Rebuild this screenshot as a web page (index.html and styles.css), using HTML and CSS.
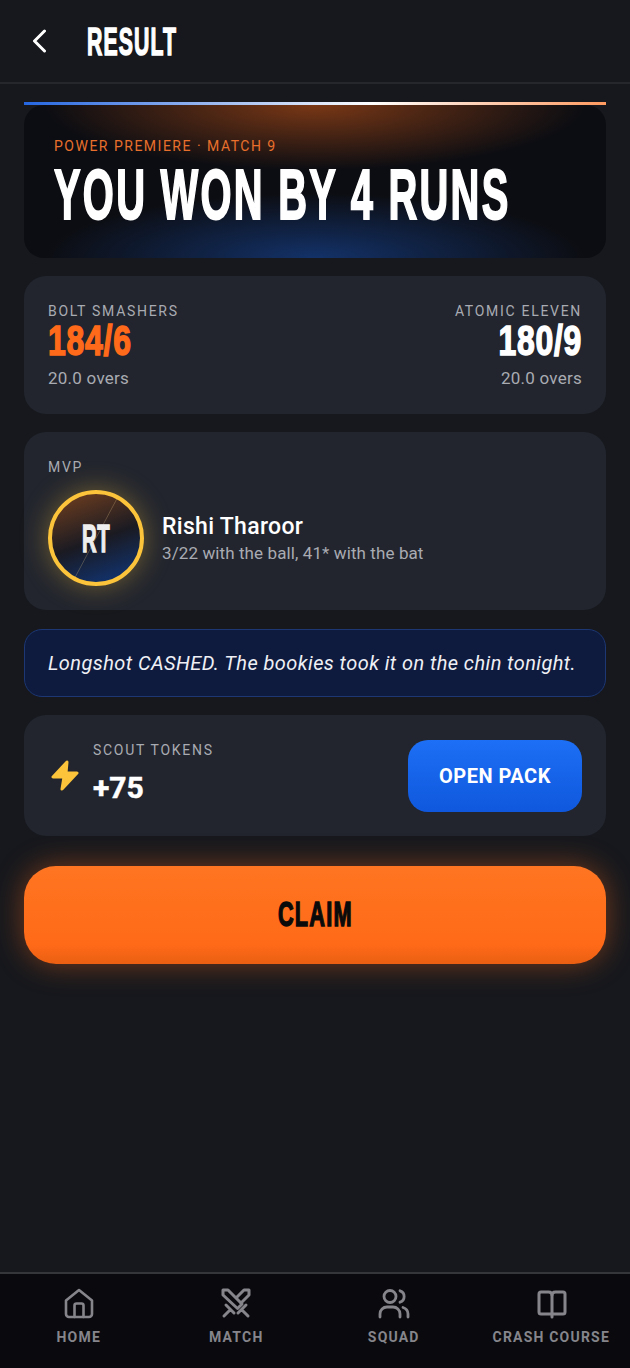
FILE: index.html
```html
<!DOCTYPE html>
<html lang="en">
<head>
    <meta charset="UTF-8">
    <meta name="viewport" content="width=device-width, initial-scale=1.0">
    <title>Result</title>
    <link rel="stylesheet" href="styles.css">
</head>
<body>
    <div id="app">
        <header class="top-bar">
            <svg class="back-icon" width="24" height="24" viewBox="0 0 24 24" fill="none" stroke="#fff" stroke-width="3" stroke-linecap="round" stroke-linejoin="round"><path d="M17.500 2 7.500 12l10 10"/></svg>
            <h1 class="display top-title">RESULT</h1>
        </header>

        <main class="content">
            <section class="hero">
                <div class="hero-stripe"></div>
                <div class="hero-body">
                    <div class="hero-label">POWER PREMIERE · MATCH 9</div>
                    <div class="display hero-title">YOU WON BY 4 RUNS</div>
                </div>
            </section>

            <section class="card score-card">
                <div class="team">
                    <div class="eyebrow">BOLT SMASHERS</div>
                    <div class="display score orange">184/6</div>
                    <div class="overs">20.0 overs</div>
                </div>
                <div class="team right">
                    <div class="eyebrow">ATOMIC ELEVEN</div>
                    <div class="display score">180/9</div>
                    <div class="overs">20.0 overs</div>
                </div>
            </section>

            <section class="card mvp-card">
                <div class="eyebrow">MVP</div>
                <div class="mvp-row">
                    <div class="avatar"><span class="display avatar-text">RT</span></div>
                    <div>
                        <div class="mvp-name">Rishi Tharoor</div>
                        <div class="mvp-line">3/22 with the ball, 41* with the bat</div>
                    </div>
                </div>
            </section>

            <section class="quote">Longshot CASHED. The bookies took it on the chin tonight.</section>

            <section class="card token-card">
                <svg class="bolt" width="32" height="34" viewBox="0 0 32 34"><path d="M19 4 5 19h11l-2 12 15-16H18z" fill="#fcc43a" stroke="#fcc43a" stroke-width="3" stroke-linejoin="round"/></svg>
                <div class="token-text">
                    <div class="eyebrow">SCOUT TOKENS</div>
                    <div class="token-num">+75</div>
                </div>
                <button class="pack-btn">OPEN PACK</button>
            </section>

            <button class="claim-btn"><span class="display claim-text">CLAIM</span></button>
        </main>

        <nav class="bottom-nav">
            <div class="nav-item">
                <svg width="32" height="32" viewBox="0 0 32 32" fill="none" stroke="#85858b" stroke-width="2.600" stroke-linejoin="round" stroke-linecap="round"><path d="M3 13.500 16 3l13 10.500V27a3 3 0 0 1-3 3H6a3 3 0 0 1-3-3z"/><path d="M11.500 30V18.500a2 2 0 0 1 2-2h5a2 2 0 0 1 2 2V30"/></svg>
                <span>HOME</span>
            </div>
            <div class="nav-item">
                <svg width="32" height="32" viewBox="0 0 32 32" fill="none" stroke="#85858b" stroke-width="3" stroke-linejoin="round" stroke-linecap="round"><path d="M3 3h5l14 14-4.500 4.500L3 8z"/><path d="M17 10 24 3h5v5l-8 8"/><path d="M6 18l8 8M18 26l8-8M4 29l5-5M28 29l-5-5"/></svg>
                <span>MATCH</span>
            </div>
            <div class="nav-item">
                <svg width="32" height="32" viewBox="0 0 32 32" fill="none" stroke="#85858b" stroke-width="2.800" stroke-linecap="round" stroke-linejoin="round"><circle cx="12" cy="9.500" r="6"/><path d="M22 3.800a6 6 0 0 1 0 11.400"/><path d="M2 30v-3a7 7 0 0 1 7-7h6a7 7 0 0 1 7 7v3"/><path d="M25 20.500a7 7 0 0 1 5 6.500v3"/></svg>
                <span>SQUAD</span>
            </div>
            <div class="nav-item">
                <svg width="32" height="32" viewBox="0 0 32 32" fill="none" stroke="#85858b" stroke-width="3" stroke-linecap="round" stroke-linejoin="round"><path d="M17 8c0-2-1.500-3-3.500-3H6a2 2 0 0 0-2 2v18a2 2 0 0 0 2 2h22a2 2 0 0 0 2-2V7a2 2 0 0 0-2-2h-7.500C18.500 5 17 6 17 8z"/><path d="M17 8v22"/></svg>
                <span>CRASH COURSE</span>
            </div>
        </nav>
    </div>
</body>
</html>
```

FILE: styles.css
```css
* {box-sizing: border-box;}
html, body {margin: 0; padding: 0;}
body {background: #16181d; color: #fff; font-family: "Roboto", "Liberation Sans", sans-serif;}
#app {width: 630px; height: 1368px; display: flex; flex-direction: column; overflow: hidden;}

/* no condensed face installed, so the headlines get squeezed with scaleX */
.display {
    display: inline-block;
    font-family: "Liberation Sans", sans-serif;
    font-weight: 700;
    white-space: nowrap;
    transform-origin: left center;
    -webkit-text-stroke: 1.500px currentColor;
}

.top-bar {
    height: 84px;
    flex: none;
    display: flex;
    align-items: center;
    gap: 36px;
    padding: 0 27px;
    border-bottom: 2px solid #25272c;
}
.back-icon {flex: none;}
.top-title {margin: 0; font-size: 39px; line-height: 1; letter-spacing: 2px; transform: scaleX(.545);}

.content {flex: 1; padding: 18px 24px 0; display: flex; flex-direction: column;}

.hero-stripe {
    height: 3px;
    background: linear-gradient(90deg, #2566e0 0%, #fff 60%, #ff9a60 100%);
}
.hero-body {
    height: 153px;
    padding: 33px 30px 0;
    border-radius: 20px;
    background:
        radial-gradient(ellipse 270px 65px at 50% 0, rgba(255, 107, 26, .45), transparent 100%),
        radial-gradient(ellipse 270px 65px at 50% 100%, rgba(26, 86, 190, .5), transparent 100%),
        #0c0d12;
}
.hero-label {font-size: 14px; line-height: 16px; letter-spacing: 1.500px; color: #e8702c;}
.hero-title {display: block; margin-top: 7px; font-size: 71px; line-height: 68px; letter-spacing: 4px; transform: scaleX(.562); -webkit-text-stroke-width: 2px;}

.card {background: #22252e; border-radius: 22px; margin-top: 18px;}
.eyebrow {font-size: 14px; line-height: 16px; letter-spacing: 1.700px; color: #a9abb2;}

.score-card {
    height: 138px;
    padding: 27px 24px 0;
    display: flex;
    justify-content: space-between;
}
.team.right {text-align: right;}
.team.right .score {transform-origin: right center;}
.score {display: block; font-size: 42px; line-height: 42px; letter-spacing: 1px; margin-top: 1px; transform: scaleX(.76);}
.orange {color: #ff6a1a;}
.overs {font-size: 17px; line-height: 20px; letter-spacing: .25px; margin-top: 6px; color: #a9abb2;}

.mvp-card {height: 178px; padding: 27px 24px 0;}
.mvp-row {display: flex; align-items: center; gap: 18px; margin-top: 15px;}
.avatar {
    width: 96px;
    height: 96px;
    flex: none;
    border-radius: 50%;
    border: 4px solid #fcc43a;
    box-shadow: 0 0 28px rgba(252, 196, 58, .38);
    background:
        linear-gradient(118deg, transparent 49.300%, rgba(255, 220, 150, .24) 50%, transparent 50.700%),
        linear-gradient(160deg, #74401f 0%, #1a1a22 52%, #123066 88%);
    display: flex;
    align-items: center;
    justify-content: center;
    color: #eee;
}
.avatar-text {font-size: 39px; line-height: 1; letter-spacing: 1px; transform: scaleX(.52); transform-origin: center;}
.mvp-name {font-size: 23px; line-height: 26px; font-weight: 500; letter-spacing: .3px;}
.mvp-line {font-size: 17px; line-height: 20px; letter-spacing: .1px; margin-top: 3px; color: #a9abb2;}

.quote {
    margin-top: 19px;
    height: 68px;
    display: flex;
    align-items: center;
    padding: 0 23px;
    background: #0e1a3e;
    border: 1.500px solid #1c3773;
    border-radius: 18px;
    font-style: italic;
    font-size: 20px;
    letter-spacing: .42px;
    color: #eef0f5;
    white-space: nowrap;
}

.token-card {
    height: 121px;
    display: flex;
    align-items: center;
    padding: 0 24px;
}
.bolt {flex: none; margin-right: 13px; margin-top: -1px;}
.token-text {flex: 1; margin-top: -5px;}
.token-num {font-size: 30px; line-height: 34px; font-weight: 700; margin-top: 13px; -webkit-text-stroke: .5px currentColor;}
.pack-btn {
    width: 174px;
    height: 72px;
    border: 0;
    border-radius: 20px;
    background: linear-gradient(180deg, #1d6ff5 0%, #0f58dd 100%);
    color: #fff;
    font-family: inherit;
    font-size: 20px;
    font-weight: 700;
    letter-spacing: .5px;
}

.claim-btn {
    margin-top: 30px;
    height: 98px;
    flex: none;
    border: 0;
    border-radius: 32px;
    padding-bottom: 4px;
    background: linear-gradient(180deg, #ff7521 0%, #ff6a18 80%, #ea5f12 100%);
    box-shadow: 0 0 30px rgba(255, 107, 26, .42);
    color: #0a0a0a;
}
.claim-text {font-size: 35px; line-height: 1; letter-spacing: 2px; transform: scaleX(.62); transform-origin: center;}

.bottom-nav {
    height: 96px;
    flex: none;
    display: flex;
    padding-top: 13px;
    background: #0a0a0e;
    border-top: 2px solid #34363a;
}
.nav-item {
    flex: 1;
    display: flex;
    flex-direction: column;
    align-items: center;
    gap: 10px;
    color: #85858b;
    font-size: 14px;
    line-height: 16px;
    font-weight: 700;
    letter-spacing: 1.200px;
}
.nav-item span {white-space: nowrap;}
```
